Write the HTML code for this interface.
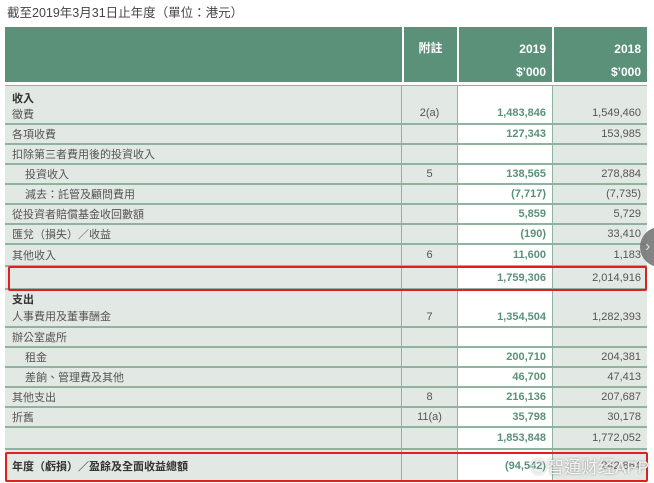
<!DOCTYPE html><html><head><meta charset="utf-8"><style>
body{margin:0;width:654px;height:483px;background:#fff;position:relative;overflow:hidden;font-family:"Liberation Sans","Noto Sans CJK TC",sans-serif;color:#555;font-size:11px}
.t{position:absolute;left:7px;top:2px;font-size:12.5px;color:#444}
.c{position:absolute;box-sizing:border-box}
.hd{background:#5a9178;color:#fff;font-weight:bold;font-size:12px;text-align:right}
.row{position:absolute;left:5px;width:642px}
.row div{position:absolute;top:0;height:100%;box-sizing:border-box;display:flex;align-items:center}
.l{left:0;width:396px;background:#e2e8e3;padding-left:7px}
.n{left:397px;width:55px;background:#e2e8e3;justify-content:center}
.a{left:453px;width:94px;background:#fff;justify-content:flex-end;padding-right:6px;color:#5a9178;font-weight:bold}
.b{left:548px;width:94px;background:#e2e8e3;justify-content:flex-end;padding-right:6px}
.red{position:absolute;border:2px solid #e02020;border-radius:2px;box-sizing:border-box}
</style></head><body>
<div class="t">截至2019年3月31日止年度（單位：港元）</div>
<div class="c hd" style="left:5px;top:27px;width:397px;height:55px"></div>
<div class="c hd" style="left:404px;top:27px;width:53px;height:55px;text-align:center;padding-top:12px">附註</div>
<div class="c hd" style="left:459px;top:27px;width:93px;height:55px;padding:11px 6px 0 0;line-height:23px">2019<br>$’000</div>
<div class="c hd" style="left:554px;top:27px;width:93px;height:55px;padding:11px 6px 0 0;line-height:23px">2018<br>$’000</div>
<div class="c" style="left:5px;top:85px;width:642px;height:396px;background:#8fb39f"></div>

<div class="row" style="top:86px;height:37px"><div class="l" style="display:block;padding-top:5px;line-height:16px"><b style="color:#333">收入</b><br>徵費</div><div class="n" style="align-items:flex-end;padding-bottom:4px">2(a)</div><div class="a" style="align-items:flex-end;padding-bottom:4px">1,483,846</div><div class="b" style="align-items:flex-end;padding-bottom:4px">1,549,460</div></div>
<div class="row" style="top:125px;height:18px"><div class="l">各項收費</div><div class="n"></div><div class="a">127,343</div><div class="b">153,985</div></div>
<div class="row" style="top:145px;height:18px"><div class="l">扣除第三者費用後的投資收入</div><div class="n"></div><div class="a"></div><div class="b"></div></div>
<div class="row" style="top:165px;height:18px"><div class="l" style="padding-left:20px">投資收入</div><div class="n">5</div><div class="a">138,565</div><div class="b">278,884</div></div>
<div class="row" style="top:185px;height:18px"><div class="l" style="padding-left:20px">減去：託管及顧問費用</div><div class="n"></div><div class="a">(7,717)</div><div class="b">(7,735)</div></div>
<div class="row" style="top:205px;height:18px"><div class="l">從投資者賠償基金收回數額</div><div class="n"></div><div class="a">5,859</div><div class="b">5,729</div></div>
<div class="row" style="top:225px;height:18px"><div class="l">匯兌（損失）／收益</div><div class="n"></div><div class="a">(190)</div><div class="b">33,410</div></div>
<div class="row" style="top:245px;height:20px"><div class="l">其他收入</div><div class="n">6</div><div class="a">11,600</div><div class="b">1,183</div></div>
<div class="row" style="top:267px;height:21px"><div class="l"></div><div class="n"></div><div class="a">1,759,306</div><div class="b">2,014,916</div></div>
<div class="row" style="top:290px;height:36px"><div class="l" style="display:block;padding-top:2px;line-height:17px"><b style="color:#333">支出</b><br>人事費用及董事酬金</div><div class="n" style="align-items:flex-end;padding-bottom:3px">7</div><div class="a" style="align-items:flex-end;padding-bottom:3px">1,354,504</div><div class="b" style="align-items:flex-end;padding-bottom:3px">1,282,393</div></div>
<div class="row" style="top:328px;height:18px"><div class="l">辦公室處所</div><div class="n"></div><div class="a"></div><div class="b"></div></div>
<div class="row" style="top:348px;height:18px"><div class="l" style="padding-left:20px">租金</div><div class="n"></div><div class="a">200,710</div><div class="b">204,381</div></div>
<div class="row" style="top:368px;height:18px"><div class="l" style="padding-left:20px">差餉、管理費及其他</div><div class="n"></div><div class="a">46,700</div><div class="b">47,413</div></div>
<div class="row" style="top:388px;height:18px"><div class="l">其他支出</div><div class="n">8</div><div class="a">216,136</div><div class="b">207,687</div></div>
<div class="row" style="top:408px;height:18px"><div class="l">折舊</div><div class="n">11(a)</div><div class="a">35,798</div><div class="b">30,178</div></div>
<div class="row" style="top:428px;height:20px"><div class="l"></div><div class="n"></div><div class="a">1,853,848</div><div class="b">1,772,052</div></div>
<div class="row" style="top:450px;height:31px"><div class="l"><b style="color:#333;font-weight:bold">年度（虧損）／盈餘及全面收益總額</b></div><div class="n"></div><div class="a">(94,542)</div><div class="b">242,864</div></div>

<div class="red" style="left:8px;top:266px;width:639px;height:25px"></div>
<div class="red" style="left:5px;top:452px;width:643px;height:30px"></div>
<div style="position:absolute;left:640px;top:227px;width:40px;height:40px;border-radius:50%;background:rgba(110,110,110,.85);color:#ddd;font-size:16px;line-height:40px;padding-left:5px;box-sizing:border-box">›</div>
<div style="position:absolute;left:530px;top:453px;font-size:17px;color:rgba(255,255,255,.85);text-shadow:0 0 2px #888">◎智通财经APP</div>
</body></html>
